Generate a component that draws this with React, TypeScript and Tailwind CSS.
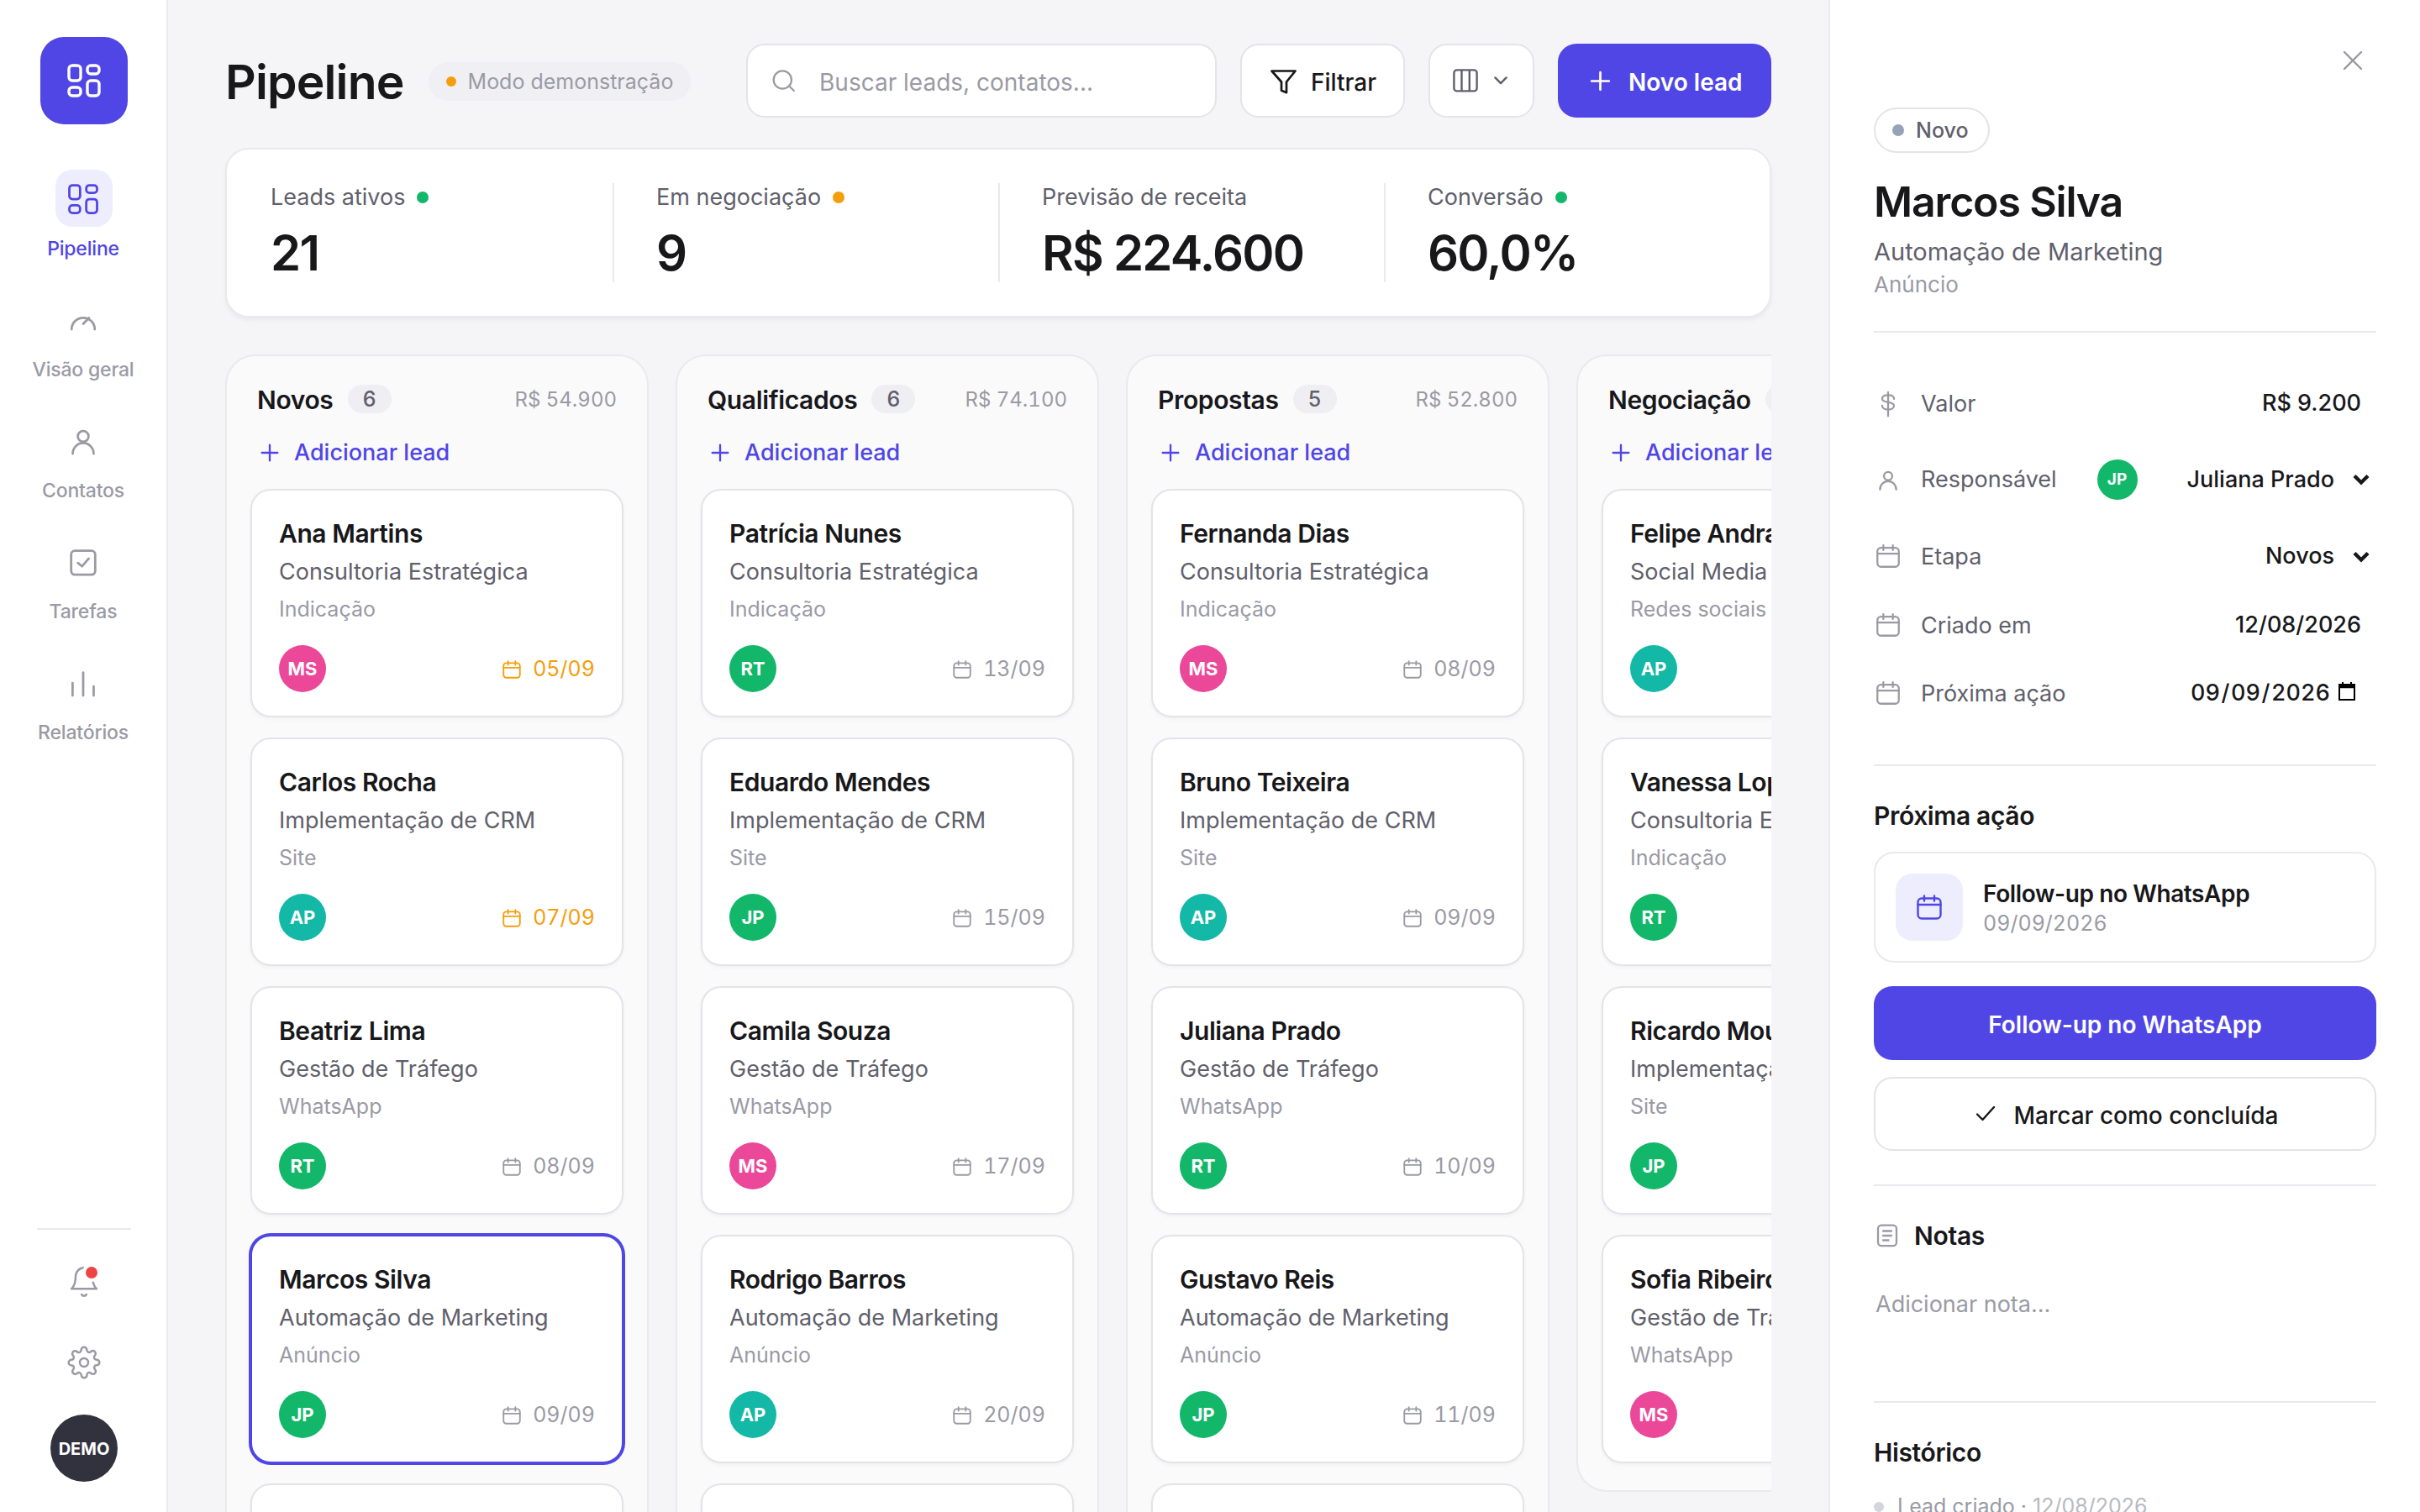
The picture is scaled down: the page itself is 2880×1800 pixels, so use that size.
import type { ReactNode } from 'react'
import { FiBell, FiSettings } from 'react-icons/fi'
import clsx from 'clsx'

type Lead = { name: string; service: string; source: string; owner: string; date: string; late?: boolean; selected?: boolean }
type Column = { title: string; total: string; leads: Lead[]; count: number }

const ownerColors: Record<string, string> = {
  MS: 'bg-[#ec4899]',
  AP: 'bg-[#14b8a6]',
  RT: 'bg-[#12b76a]',
  JP: 'bg-[#12b76a]',
}

const columns: Column[] = [
  {
    title: 'Novos',
    count: 6,
    total: 'R$ 54.900',
    leads: [
      { name: 'Ana Martins', service: 'Consultoria Estratégica', source: 'Indicação', owner: 'MS', date: '05/09', late: true },
      { name: 'Carlos Rocha', service: 'Implementação de CRM', source: 'Site', owner: 'AP', date: '07/09', late: true },
      { name: 'Beatriz Lima', service: 'Gestão de Tráfego', source: 'WhatsApp', owner: 'RT', date: '08/09' },
      { name: 'Marcos Silva', service: 'Automação de Marketing', source: 'Anúncio', owner: 'JP', date: '09/09', selected: true },
      { name: 'Larissa Gomes', service: 'Social Media', source: 'Redes sociais', owner: 'MS', date: '12/09' },
    ],
  },
  {
    title: 'Qualificados',
    count: 6,
    total: 'R$ 74.100',
    leads: [
      { name: 'Patrícia Nunes', service: 'Consultoria Estratégica', source: 'Indicação', owner: 'RT', date: '13/09' },
      { name: 'Eduardo Mendes', service: 'Implementação de CRM', source: 'Site', owner: 'JP', date: '15/09' },
      { name: 'Camila Souza', service: 'Gestão de Tráfego', source: 'WhatsApp', owner: 'MS', date: '17/09' },
      { name: 'Rodrigo Barros', service: 'Automação de Marketing', source: 'Anúncio', owner: 'AP', date: '20/09' },
      { name: 'Renata Alves', service: 'Social Media', source: 'Redes sociais', owner: 'RT', date: '22/09' },
    ],
  },
  {
    title: 'Propostas',
    count: 5,
    total: 'R$ 52.800',
    leads: [
      { name: 'Fernanda Dias', service: 'Consultoria Estratégica', source: 'Indicação', owner: 'MS', date: '08/09' },
      { name: 'Bruno Teixeira', service: 'Implementação de CRM', source: 'Site', owner: 'AP', date: '09/09' },
      { name: 'Juliana Prado', service: 'Gestão de Tráfego', source: 'WhatsApp', owner: 'RT', date: '10/09' },
      { name: 'Gustavo Reis', service: 'Automação de Marketing', source: 'Anúncio', owner: 'JP', date: '11/09' },
      { name: 'Tatiane Moraes', service: 'Social Media', source: 'Redes sociais', owner: 'AP', date: '14/09' },
    ],
  },
  {
    title: 'Negociação',
    count: 4,
    total: 'R$ 42.800',
    leads: [
      { name: 'Felipe Andrade', service: 'Social Media', source: 'Redes sociais', owner: 'AP', date: '10/09' },
      { name: 'Vanessa Lopes', service: 'Consultoria Estratégica', source: 'Indicação', owner: 'RT', date: '11/09' },
      { name: 'Ricardo Moura', service: 'Implementação de CRM', source: 'Site', owner: 'JP', date: '12/09' },
      { name: 'Sofia Ribeiro', service: 'Gestão de Tráfego', source: 'WhatsApp', owner: 'MS', date: '16/09' },
    ],
  },
]

const stats = [
  { label: 'Leads ativos', value: '21', dot: 'bg-[#12b76a]' },
  { label: 'Em negociação', value: '9', dot: 'bg-[#f59e0b]' },
  { label: 'Previsão de receita', value: 'R$ 224.600' },
  { label: 'Conversão', value: '60,0%', dot: 'bg-[#12b76a]' },
]

/* ---------- icons ---------- */

const Icon = ({ size, className, stroke = 1.6, children }: { size: number; className?: string; stroke?: number; children: ReactNode }) => (
  <svg
    width={size}
    height={size}
    viewBox="0 0 24 24"
    fill="none"
    stroke="currentColor"
    strokeWidth={stroke}
    strokeLinecap="round"
    strokeLinejoin="round"
    className={clsx('shrink-0', className)}
  >
    {children}
  </svg>
)

const boardShape = (
  <>
    <rect x="3" y="3" width="7" height="9" rx="2" />
    <rect x="14" y="3" width="7" height="5" rx="2" />
    <rect x="14" y="12" width="7" height="9" rx="2" />
    <rect x="3" y="16" width="7" height="5" rx="2" />
  </>
)

const gaugeShape = (
  <>
    <path d="M4.5 18a7.5 7.5 0 0 1 15 0" />
    <path d="M12 14.5l3.8-3.9" />
  </>
)

const userShape = (
  <>
    <circle cx="12" cy="9" r="3.5" />
    <path d="M5.2 20.3a6.8 7 0 0 1 13.6 0" />
  </>
)

const taskShape = (
  <>
    <rect x="4.2" y="4.7" width="15.6" height="15.6" rx="2.4" />
    <path d="M8.5 12.6l2.8 2.2 4.3-5" />
  </>
)

const barsShape = <path d="M5.1 12v8.2M12 5.2v15M18.8 14.2v6" />

const calendarShape = (
  <>
    <rect x="3" y="5" width="18" height="16" rx="3" />
    <path d="M3 10h18M8 3v4M16 3v4" />
  </>
)

const dollarShape = (
  <>
    <path d="M12 2.8v20" />
    <path d="M17 8.4c0-2-2-3.2-5-3.2S7 6.4 7 8.3c0 4 10 1.8 10 5.8 0 1.9-2 3.2-5 3.2s-5-1.3-5-3.2" />
  </>
)

const plusShape = <path d="M12 4v16M4 12h16" />

/* ---------- sidebar ---------- */

const navItems = [
  { label: 'Pipeline', shape: boardShape, active: true },
  { label: 'Visão geral', shape: gaugeShape },
  { label: 'Contatos', shape: userShape },
  { label: 'Tarefas', shape: taskShape },
  { label: 'Relatórios', shape: barsShape },
]

const Sidebar = () => {
  return (
    <aside className="flex w-[200px] shrink-0 flex-col items-center border-r-2 border-[#e9e9ee] bg-white pt-11 pb-9 pl-[2px] text-[#9a9aa5]">
      <div className="flex size-[104px] items-center justify-center rounded-[28px] bg-[#4f46e5] text-white">
        <Icon size={48} stroke={1.7}>{boardShape}</Icon>
      </div>
      <nav className="mt-[54px] flex flex-col gap-9">
        {navItems.map((item) => (
          <a key={item.label} className={clsx('flex flex-col items-center', item.active && 'text-[#4f46e5]')}>
            <span className={clsx('flex size-[68px] items-center justify-center rounded-[20px] pt-px pr-[2px]', item.active && 'bg-[#eeedfd]')}>
              <Icon size={44} stroke={1.5}>{item.shape}</Icon>
            </span>
            <span className="mt-3 pr-[2px] text-[23px] leading-7 font-medium tracking-[-0.008em]">{item.label}</span>
          </a>
        ))}
      </nav>
      <div className="mt-auto h-[2px] w-28 bg-[#e9e9ee]" />
      <div className="relative mt-[42px]">
        <FiBell size={40} strokeWidth={1.5} />
        <span className="absolute -top-[2px] right-0 size-[22px] rounded-full border-4 border-white bg-[#ef4444]" />
      </div>
      <FiSettings size={40} strokeWidth={1.5} className="mt-14" />
      <div className="mt-[42px] flex size-20 items-center justify-center rounded-full bg-[#32323e] pt-[2px] text-[20px] font-bold text-white">DEMO</div>
    </aside>
  )
}

/* ---------- header ---------- */

const Header = () => {
  return (
    <header className="flex h-[88px] shrink-0 items-center">
      <h1 className="pt-[2px] text-[57px] leading-none font-semibold tracking-[-0.015em]">Pipeline</h1>
      <div className="mt-[2px] ml-[29px] flex h-[46px] w-[312px] items-center rounded-full bg-[#f0f0f4] pl-[21px] text-[25px] text-[#9a9aa5]">
        <span className="mr-[14px] size-3 rounded-full bg-[#f59e0b]" />
        <span className="pt-[2px]">Modo demonstração</span>
      </div>
      <div className="ml-auto flex gap-7">
        <div className="flex h-[88px] w-[560px] items-center rounded-[22px] border-2 border-[#e3e3e9] bg-white pl-[26px] text-[28px] text-[#9a9aa5]">
          <Icon size={34} className="mr-[25px]">
            <circle cx="10.8" cy="11.3" r="7.5" />
            <path d="M16.6 16.8l3.7 3.7" />
          </Icon>
          <span className="pt-[3px]">Buscar leads, contatos...</span>
        </div>
        <button className="flex h-[88px] w-[196px] items-center rounded-[22px] border-2 border-[#e3e3e9] bg-white pl-[29px] text-[28px] font-medium">
          <svg width="40" height="40" viewBox="0 0 40 40" fill="none" stroke="currentColor" strokeWidth="2.7" strokeLinejoin="round" className="mr-[13px]">
            <path d="M6.5 8.5h28L24 21.5v12.7l-6-2.4V21.5z" />
          </svg>
          <span className="pt-[3px]">Filtrar</span>
        </button>
        <button className="flex h-[88px] w-[126px] items-center rounded-[22px] border-2 border-[#e3e3e9] bg-white pl-[27px] text-[#60606b]">
          <svg width="30" height="28" viewBox="0 0 30 28" fill="none" stroke="currentColor" strokeWidth="2.4">
            <rect x="1.4" y="1.4" width="27.2" height="25" rx="3.5" />
            <path d="M10.5 1.4v25M19.8 1.4v25" />
          </svg>
          <svg width="16" height="10" viewBox="0 0 16 10" fill="none" stroke="currentColor" strokeWidth="2.4" strokeLinecap="round" strokeLinejoin="round" className="ml-[19px]">
            <path d="M1.4 1.4L8 8.2l6.6-6.8" />
          </svg>
        </button>
        <button className="flex h-[88px] w-[254px] items-center rounded-[22px] bg-[#4f46e5] pl-[35px] text-[28px] font-semibold text-white">
          <Icon size={31} stroke={2.1} className="mr-[18px]">{plusShape}</Icon>
          <span className="pt-[3px]">Novo lead</span>
        </button>
      </div>
    </header>
  )
}

const Stats = () => {
  return (
    <section className="mt-9 grid h-[202px] shrink-0 grid-cols-4 rounded-[28px] border-2 border-[#e9e9ee] bg-white pt-10 shadow-[0_3px_5px_rgba(20,20,40,0.05)]">
      {stats.map((stat, i) => (
        <div key={stat.label} className={clsx('h-[118px] border-l-2 pl-[50px]', i === 0 ? 'border-transparent' : 'border-[#e9e9ee]')}>
          <div className="flex h-[34px] items-center gap-[14px] text-[27px] text-[#60606b]">
            {stat.label}
            {stat.dot && <span className={clsx('size-[14px] rounded-full', stat.dot)} />}
          </div>
          <div className="mt-[15px] text-[58px] leading-[68px] font-semibold tracking-[-0.03em]">{stat.value}</div>
        </div>
      ))}
    </section>
  )
}

/* ---------- board ---------- */

const Avatar = ({ initials, className }: { initials: string; className: string }) => (
  <span className={clsx('flex items-center justify-center rounded-full pt-px font-bold text-white', ownerColors[initials], className)}>{initials}</span>
)

const LeadCard = ({ lead }: { lead: Lead }) => {
  return (
    <article
      className={clsx(
        'h-[272px] shrink-0 rounded-[24px] border-2 bg-white px-8 pt-7',
        lead.selected ? 'border-[#4f46e5] ring-2 ring-[#4f46e5]' : 'border-[#e3e3e9] shadow-[0_2px_4px_rgba(20,20,40,0.04)]'
      )}
    >
      <h3 className="text-[30px] leading-[46px] font-semibold tracking-[-0.014em]">{lead.name}</h3>
      <p className="text-[27px] leading-[45px] text-[#60606b]">{lead.service}</p>
      <p className="text-[25px] leading-[44px] text-[#9a9aa5]">{lead.source}</p>
      <div className="mt-[21px] flex items-center justify-between">
        <Avatar initials={lead.owner} className="size-14 text-[22px]" />
        <span className={clsx('flex items-center gap-3 pt-[2px] text-[25px] tabular-nums', lead.late ? 'text-[#f59e0b]' : 'text-[#9a9aa5]')}>
          <Icon size={26} stroke={1.7}>{calendarShape}</Icon>
          {lead.date}
        </span>
      </div>
    </article>
  )
}

const Board = () => {
  return (
    <div className="mt-11 flex min-h-0 flex-1 items-start gap-8 overflow-hidden">
      {columns.map((col) => (
        <section key={col.title} className="flex w-[504px] shrink-0 flex-col rounded-[36px] border-2 border-[#e9e9ee] bg-[#fafafb] px-7 pt-[34px] pb-8">
          <div className="flex h-[34px] items-center px-2">
            <h2 className="pt-px text-[30px] leading-none font-semibold tracking-[-0.012em]">{col.title}</h2>
            <span className="ml-[17px] flex h-[34px] w-[52px] items-center justify-center rounded-full bg-[#eeeef3] pt-[2px] text-[25px] font-medium text-[#60606b]">{col.count}</span>
            <span className="ml-auto pt-[2px] text-[24px] text-[#9a9aa5] tabular-nums">{col.total}</span>
          </div>
          <button className="mt-[21px] mb-[17px] flex h-[52px] items-center pl-[9px] text-[27px] font-medium text-[#4f46e5]">
            <Icon size={28} stroke={2} className="mr-[15px]">{plusShape}</Icon>
            Adicionar lead
          </button>
          <div className="flex flex-col gap-6">
            {col.leads.map((lead) => (
              <LeadCard key={lead.name} lead={lead} />
            ))}
          </div>
        </section>
      ))}
    </div>
  )
}

/* ---------- lead details ---------- */

const Field = ({ label, shape, className, children }: { label: string; shape: ReactNode; className: string; children: ReactNode }) => (
  <div className={clsx('flex items-center text-[27px]', className)}>
    <Icon size={34} className="text-[#9a9aa5]">{shape}</Icon>
    <span className="ml-[22px] pt-[2px] text-[#60606b]">{label}</span>
    <div className="ml-auto flex items-center pt-px font-medium">{children}</div>
  </div>
)

const SelectArrow = () => (
  <svg width="20" height="14" viewBox="0 0 20 14" fill="none" stroke="currentColor" strokeWidth="4.4" className="mr-2 ml-[22px]">
    <path d="M2 2.5l8 8 8-8" />
  </svg>
)

const Details = () => {
  return (
    <aside className="flex w-[704px] shrink-0 flex-col border-l-2 border-[#e9e9ee] bg-white px-[52px] pt-11">
      <button className="flex size-14 shrink-0 items-center justify-center self-end text-[#9a9aa5]">
        <svg width="24" height="24" viewBox="0 0 24 24" fill="none" stroke="currentColor" strokeWidth="2.4" strokeLinecap="round">
          <path d="M2 2l20 20M22 2L2 22" />
        </svg>
      </button>
      <div className="mt-7 flex h-[54px] w-[138px] shrink-0 items-center rounded-full border-2 border-[#e3e3e9] pl-5 text-[25px] font-medium text-[#60606b]">
        <span className="mr-[14px] size-[14px] rounded-full bg-[#94a3b8]" />
        <span className="pt-px">Novo</span>
      </div>
      <h2 className="mt-7 text-[50px] leading-[60px] font-semibold tracking-[-0.023em]">Marcos Silva</h2>
      <p className="mt-3 text-[29px] leading-9 text-[#60606b]">Automação de Marketing</p>
      <p className="mt-[3px] text-[26px] leading-9 text-[#9a9aa5]">Anúncio</p>

      <div className="mt-[37px] border-y-2 border-[#e9e9ee] pt-11 pb-[45px]">
        <Field label="Valor" className="h-20" shape={dollarShape}>
          <span className="mr-[18px]">R$ 9.200</span>
        </Field>
        <Field label="Responsável" className="h-[101px]" shape={userShape}>
          <Avatar initials="JP" className="mr-[59px] size-12 text-[19px]" />
          Juliana Prado
          <SelectArrow />
        </Field>
        <Field label="Etapa" className="h-[82px]" shape={calendarShape}>
          Novos
          <SelectArrow />
        </Field>
        <Field label="Criado em" className="h-[82px]" shape={calendarShape}>
          <span className="mr-[18px]">12/08/2026</span>
        </Field>
        <Field label="Próxima ação" className="h-20" shape={calendarShape}>
          <span className="tabular-nums">09</span>
          <span className="px-[1.5px]">/</span>
          <span className="tabular-nums">09</span>
          <span className="px-[1.5px]">/</span>
          <span className="tabular-nums">2026</span>
          <svg width="20" height="22" viewBox="0 0 20 22" fill="none" stroke="black" strokeWidth="2" className="mr-[25px] mb-[6px] ml-[10px]">
            <path d="M1 3h18v18H1zM1 4.5h18M1 6.2h18" />
            <path d="M5 0v3M15 0v3" />
          </svg>
        </Field>
      </div>

      <h3 className="mt-[39px] text-[30px] leading-10 font-semibold tracking-[-0.012em]">Próxima ação</h3>
      <div className="mt-[23px] flex h-[132px] shrink-0 items-center rounded-[24px] border-2 border-[#e9e9ee] pl-6">
        <span className="flex size-20 items-center justify-center rounded-[20px] bg-[#eeedfd] text-[#4f46e5]">
          <Icon size={36}>{calendarShape}</Icon>
        </span>
        <div className="ml-6 pt-[2px]">
          <p className="text-[28px] leading-9 font-semibold tracking-[-0.014em]">Follow-up no WhatsApp</p>
          <p className="text-[25px] leading-[34px] text-[#9a9aa5] tabular-nums">09/09/2026</p>
        </div>
      </div>
      <button className="mt-7 h-[88px] shrink-0 rounded-[22px] bg-[#4f46e5] pt-[3px] text-[28px] font-semibold text-white">Follow-up no WhatsApp</button>
      <button className="mt-5 flex h-[88px] shrink-0 items-center justify-center rounded-[22px] border-2 border-[#e3e3e9] pl-1 text-[28px] font-medium">
        <svg width="24" height="20" viewBox="0 0 24 20" fill="none" stroke="currentColor" strokeWidth="2.4" strokeLinecap="round" strokeLinejoin="round" className="mr-[22px]">
          <path d="M2 10.5l6.5 6.5L22 2" />
        </svg>
        <span className="pt-[3px]">Marcar como concluída</span>
      </button>

      <div className="mt-10 border-y-2 border-[#e9e9ee] pt-[39px] pb-[95px]">
        <h3 className="flex h-10 items-center text-[30px] font-semibold tracking-[-0.01em]">
          <svg width="26" height="28" viewBox="0 0 26 28" fill="none" stroke="currentColor" strokeWidth="2.3" strokeLinecap="round" className="mr-[19px] ml-[3px] text-[#9a9aa5]">
            <rect x="2" y="1.6" width="22" height="24.5" rx="4" />
            <path d="M8 8.5h10M8 14h10M8 19.5h6.5" />
          </svg>
          Notas
        </h3>
        <p className="mt-[42px] pl-[2px] text-[27px] leading-10 text-[#9a9aa5]">Adicionar nota...</p>
      </div>

      <h3 className="mt-[39px] text-[30px] leading-10 font-semibold tracking-[-0.012em]">Histórico</h3>
      <div className="mt-[25px] flex h-10 shrink-0 items-center text-[25px] text-[#9a9aa5]">
        <span className="mr-4 size-3 rounded-full bg-[#d4d4dc]" />
        <span className="whitespace-pre">Lead criado · </span>
        <span className="text-[#b9b9c1]">12/08/2026</span>
      </div>
    </aside>
  )
}

const App = () => {
  return (
    <div className="flex h-[1800px] w-[2880px] overflow-hidden bg-[#f5f5f8] font-['Inter','Liberation_Sans',sans-serif] text-[#18181b]">
      <Sidebar />
      <main className="flex min-w-0 flex-1 flex-col px-[68px] pt-[52px]">
        <Header />
        <Stats />
        <Board />
      </main>
      <Details />
    </div>
  )
}

export default App
